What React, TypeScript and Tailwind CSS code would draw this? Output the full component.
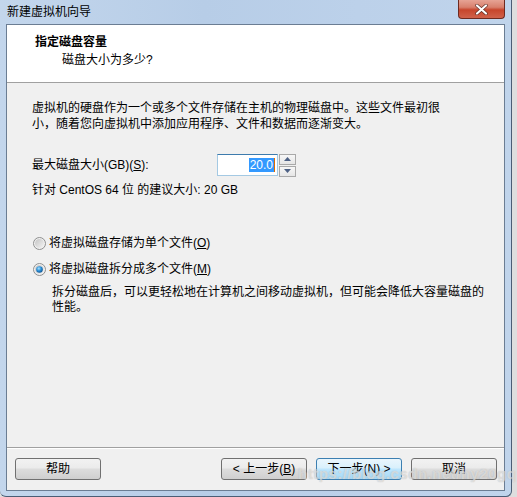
import React from "react";

const font = { fontFamily: '"Liberation Sans", "Noto Sans CJK SC", sans-serif' };

function Radio({ checked }: { checked?: boolean }) {
  return (
    <svg width="13" height="13" viewBox="0 0 13 13" className="shrink-0">
      <defs>
        <linearGradient id={checked ? "rg1" : "rg0"} x1="0" y1="0" x2="1" y2="1">
          <stop offset="0" stopColor="#c4c4c4" />
          <stop offset="1" stopColor="#f4f4f4" />
        </linearGradient>
        <radialGradient id="dot" cx="0.4" cy="0.35" r="0.7">
          <stop offset="0" stopColor="#a9e2ff" />
          <stop offset="0.5" stopColor="#2a8fd6" />
          <stop offset="1" stopColor="#0e4f8c" />
        </radialGradient>
      </defs>
      <circle cx="6.5" cy="6.5" r="6" fill="#f0f0f0" stroke="#8e8f8f" strokeWidth="1" />
      <circle cx="6.5" cy="6.5" r="4.5" fill={`url(#${checked ? "rg1" : "rg0"})`} />
      {checked && <circle cx="6.5" cy="6.5" r="3.3" fill="url(#dot)" />}
    </svg>
  );
}

function Btn({ children, def }: { children: React.ReactNode; def?: boolean }) {
  return (
    <div
      className={
        "w-[86px] h-[22px] rounded-[3px] border flex items-center justify-center text-[12px] text-black " +
        (def
          ? "border-[#3c7fb1] bg-[linear-gradient(#eaf6fd_0%,#d9f0fc_45%,#bee6fd_50%,#a7d9f5_100%)]"
          : "border-[#707070] bg-[linear-gradient(#f2f2f2_0%,#ebebeb_45%,#dddddd_50%,#cfcfcf_100%)]")
      }
    >
      {children}
    </div>
  );
}

export default function App() {
  return (
    <div className="w-[517px] h-[497px] bg-[#dedede] relative overflow-hidden" style={font}>
      <div className="w-[512px] h-[497px] flex flex-col rounded-b-[6px] border-r border-b border-[#4a5d75] bg-[linear-gradient(90deg,#c3d6ec_0%,#b7cde7_40%,#bcd1ea_70%,#c0d4eb_100%)]">
        {/* title bar */}
        <div className="h-[24px] flex items-start relative">
          <div className="pl-[7px] pt-[5px] text-[12px] leading-[14px] text-black">新建虚拟机向导</div>
          <div className="absolute left-[458px] top-0 w-[47px] h-[19px] rounded-b-[4px] border border-t-0 border-[#6e2a20] bg-[linear-gradient(#e6a394_0%,#d8806d_40%,#c7452c_55%,#d0624b_100%)] flex items-center justify-center">
            <svg width="13" height="11" viewBox="0 0 13 11">
              <path d="M2 1.5 L11 9.5 M11 1.5 L2 9.5" stroke="#5a2a22" strokeWidth="3.4" strokeLinecap="round" />
              <path d="M2 1.5 L11 9.5 M11 1.5 L2 9.5" stroke="#ffffff" strokeWidth="2.2" strokeLinecap="round" />
            </svg>
          </div>
        </div>
        {/* content */}
        <div className="ml-[6px] mr-[6px] w-[499px] h-[467px] border border-[#6b7d93] bg-[#f0f0f0] flex flex-col text-[12px] text-black">
          {/* header */}
          <div className="h-[57px] bg-white flex flex-col">
            <div className="pl-[28px] pt-[10px] leading-[14px] font-bold">指定磁盘容量</div>
            <div className="pl-[55px] pt-[4px] leading-[14px]">磁盘大小为多少?</div>
          </div>
          <div className="h-px bg-[#a0a0a0]" />
          {/* body */}
          <div className="flex-1 flex flex-col pl-[25px]">
            <div className="pt-[17px] leading-[16px] whitespace-nowrap">
              虚拟机的硬盘作为一个或多个文件存储在主机的物理磁盘中。这些文件最初很
              <br />
              小，随着您向虚拟机中添加应用程序、文件和数据而逐渐变大。
            </div>
            <div className="mt-[22px] h-[22px] flex items-center">
              <div className="w-[185px] leading-[16px]">
                最大磁盘大小(GB)(<span className="underline">S</span>):
              </div>
              <div className="w-[61px] h-[22px] border border-[#a4c9e3] border-t-[#3d7bad] bg-white flex items-center justify-end pr-[2px]">
                <span className="bg-[#3399ff] text-white leading-[14px] px-px">20.0</span>
                <span className="w-px h-[14px] bg-[#e06c00]" />
              </div>
              <div className="ml-px w-[17px] h-[23px] flex flex-col gap-px">
                <div className="h-[11px] border border-[#a9a9a9] bg-[linear-gradient(#f7f7f7,#e6e6e6)] flex items-center justify-center">
                  <svg width="7" height="4" viewBox="0 0 7 4"><path d="M0 4 L3.5 0 L7 4 Z" fill="#4d6185" /></svg>
                </div>
                <div className="h-[11px] border border-[#a9a9a9] bg-[linear-gradient(#f7f7f7,#e6e6e6)] flex items-center justify-center">
                  <svg width="7" height="4" viewBox="0 0 7 4"><path d="M0 0 L7 0 L3.5 4 Z" fill="#4d6185" /></svg>
                </div>
              </div>
            </div>
            <div className="mt-[6px] leading-[16px]">针对 CentOS 64 位 的建议大小: 20 GB</div>
            <div className="mt-[37px] h-[16px] flex items-center gap-[3px] pl-px">
              <Radio />
              <span className="leading-[16px]">
                将虚拟磁盘存储为单个文件(<span className="underline">O</span>)
              </span>
            </div>
            <div className="mt-[10px] h-[16px] flex items-center gap-[3px] pl-px">
              <Radio checked />
              <span className="leading-[16px]">
                将虚拟磁盘拆分成多个文件(<span className="underline">M</span>)
              </span>
            </div>
            <div className="mt-[8px] pl-[20px] leading-[15px] whitespace-nowrap">
              拆分磁盘后，可以更轻松地在计算机之间移动虚拟机，但可能会降低大容量磁盘的
              <br />
              性能。
            </div>
          </div>
          {/* footer */}
          <div className="h-px bg-[#a0a0a0]" />
          <div className="h-px bg-white" />
          <div className="pt-[9px] pb-[10px] pl-[8px] pr-[7px] flex items-center relative">
            <Btn>帮助</Btn>
            <div className="flex-1" />
            <div className="flex gap-[9px]">
              <Btn>
                &lt; 上一步(<span className="underline">B</span>)
              </Btn>
              <Btn def>下一步(N) &gt;</Btn>
              <Btn>取消</Btn>
            </div>
            <div className="absolute left-[291px] top-[17px] text-[15px] leading-[16px] font-bold text-white/50 tracking-[0.5px] [text-shadow:0_0_1px_rgba(140,140,140,0.6)] pointer-events-none">
              https://blog.csdn.net/hy20gq
            </div>
          </div>
        </div>
      </div>
    </div>
  );
}
